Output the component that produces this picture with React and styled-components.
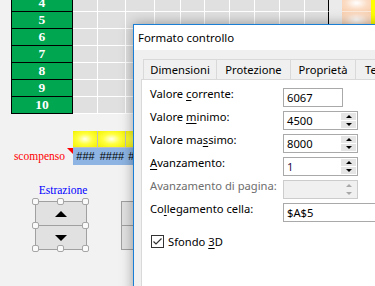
import styled, { createGlobalStyle } from "styled-components";

const GlobalStyle = createGlobalStyle`
  html, body {
    margin: 0;
    padding: 0;
    background: #f2f2f2;
  }
`;

const uiFont = `"Noto Sans", "Open Sans", sans-serif`;
const serifFont = `"Liberation Serif", "Times New Roman", serif`;

const Page = styled.div`
  position: relative;
  width: 375px;
  height: 286px;
  overflow: hidden;
  background: #f2f2f2;
`;

const Sheet = styled.div`
  display: flex;
  flex-direction: column;
  margin-top: -5px;
  padding-left: 11px;
`;

const Row = styled.div`
  display: flex;
  height: 17px;
`;

const HeaderCell = styled.div`
  box-sizing: border-box;
  width: 62px;
  height: 17px;
  background: #00a650;
  border: 1px solid #000;
  border-top: none;
  color: #fff;
  font: bold 13.5px/16px ${serifFont};
  text-align: center;
`;

const GridCell = styled.div`
  box-sizing: border-box;
  width: ${(p) => p.$w}px;
  background: #e0e0e0;
  border-right: 1px solid ${(p) => (p.$edge ? "#000" : "#fff")};
  border-bottom: 1px solid #fff;
`;

const GapCell = styled.div`
  width: 13px;
  background: #ebebeb;
`;

const AccentCell = styled.div`
  box-sizing: border-box;
  width: 29px;
  border-bottom: 1px solid #fde9da;
  background: radial-gradient(ellipse at center, #fff 0%, #fbdcc4 55%, #f9cfae 100%);
`;

const YellowStrip = styled.div`
  width: 4px;
  background: #ffff00;
`;

const LabelCell = styled.div`
  position: relative;
  box-sizing: border-box;
  width: 62px;
  padding-right: 8px;
  color: #ff0000;
  font: 11.5px/17px ${serifFont};
  text-align: right;
`;

const CommentMark = styled.span`
  position: absolute;
  top: 0;
  right: 0;
  width: 0;
  height: 0;
  border-top: 6px solid #ff0000;
  border-left: 6px solid transparent;
`;

const YellowCell = styled.div`
  box-sizing: border-box;
  width: ${(p) => p.$w}px;
  border-right: 1px solid #bfbfbf;
  border-bottom: 1px solid #bfbfbf;
  background: radial-gradient(ellipse at center, #fffff0 0%, #ffff40 45%, #f2f200 100%);
`;

const BlueCell = styled.div`
  width: ${(p) => p.$w}px;
  background: #8db4e2;
  color: #000;
  font: 11px/17px "Liberation Sans", Arial, sans-serif;
  text-align: center;
  white-space: nowrap;
  overflow: hidden;
`;

const ControlsArea = styled.div`
  display: flex;
  align-items: flex-end;
  gap: 34px;
  padding: 18px 0 0 35px;
`;

const ControlGroup = styled.div`
  display: flex;
  flex-direction: column;
  align-items: center;
  width: 52px;
`;

const Caption = styled.div`
  color: #0000ff;
  font: 11.5px/14px ${serifFont};
  margin-bottom: 4px;
  padding-left: 4px;
  white-space: nowrap;
`;

const SpinControl = styled.div`
  position: relative;
  box-sizing: border-box;
  display: flex;
  flex-direction: column;
  width: ${(p) => p.$w}px;
  height: 49px;
  border: 1px solid #a0a0a0;
  background: #e1e1e1;
`;

const SpinHalf = styled.div`
  flex: 1;
  display: flex;
  align-items: center;
  justify-content: center;
  & + & {
    border-top: 1px solid #a0a0a0;
  }
`;

const Arrow = styled.span`
  width: 0;
  height: 0;
  border-left: 6px solid transparent;
  border-right: 6px solid transparent;
  ${(p) => (p.$down ? "border-top: 6px solid #000;" : "border-bottom: 6px solid #000;")}
`;

const Handle = styled.span`
  position: absolute;
  left: ${(p) => p.$x};
  top: ${(p) => p.$y};
  box-sizing: border-box;
  width: 7px;
  height: 7px;
  margin: -4px 0 0 -4px;
  border: 1px solid #a6a6a6;
  border-radius: 2px;
  background: #fafafa;
`;

const Dialog = styled.div`
  position: absolute;
  left: 133px;
  top: 24px;
  width: 300px;
  height: 300px;
  display: flex;
  flex-direction: column;
  border: 1px solid #1a7fd4;
  background: #f0f0f0;
  box-shadow: 0 0 12px rgba(0, 0, 0, 0.35);
  font-family: ${uiFont};
  font-size: 11.2px;
  color: #000;
`;

const TitleBar = styled.div`
  height: 25px;
  padding-left: 4px;
  background: #fff;
  line-height: 25px;
  font-size: 11.4px;
`;

const Body = styled.div`
  flex: 1;
  display: flex;
  flex-direction: column;
  padding: 9px 0 0 7px;
`;

const TabStrip = styled.div`
  display: flex;
  height: 20px;
  margin-left: 2px;
`;

const Tab = styled.div`
  box-sizing: border-box;
  width: ${(p) => p.$w}px;
  height: 21px;
  border: 1px solid #d9d9d9;
  border-right: none;
  text-align: center;
  line-height: 19px;
  white-space: nowrap;
  overflow: hidden;
  &:last-child {
    border-right: 1px solid #d9d9d9;
    text-align: left;
    padding-left: 9px;
  }
`;

const Panel = styled.div`
  flex: 1;
  border: 1px solid #d9d9d9;
  background: #fff;
  padding: 8px 0 0 8px;
`;

const Form = styled.div`
  display: grid;
  grid-template-columns: 133px auto;
  row-gap: 4px;
  align-items: start;
`;

const FieldLabel = styled.div`
  line-height: 12px;
  white-space: nowrap;
  color: ${(p) => (p.$disabled ? "#6d6d6d" : "#000")};
`;

const Key = styled.span`
  text-decoration: underline;
  text-underline-offset: 2px;
`;

const Field = styled.div`
  box-sizing: border-box;
  display: flex;
  width: ${(p) => p.$w}px;
  height: 19px;
  border: 1px solid ${(p) => (p.$disabled ? "#cccccc" : "#a9a9a9")};
  background: ${(p) => (p.$disabled ? "#f0f0f0" : "#fff")};
`;

const FieldValue = styled.div`
  flex: 1;
  padding-left: 3px;
  line-height: 17px;
  color: ${(p) => p.$tint || "#000"};
`;

const SpinButtons = styled.div`
  display: flex;
  flex-direction: column;
  width: 15px;
  margin: 1px 1px 1px 0;
  gap: 1px;
`;

const SpinButton = styled.div`
  flex: 1;
  display: flex;
  align-items: center;
  justify-content: center;
  background: ${(p) => (p.$disabled ? "#f0f0f0" : "#e5e5e5")};
`;

const MiniArrow = styled.span`
  width: 0;
  height: 0;
  border-left: 3px solid transparent;
  border-right: 3px solid transparent;
  ${(p) =>
    p.$down
      ? `border-top: 3px solid ${p.$disabled ? "#a8a8a8" : "#000"};`
      : `border-bottom: 3px solid ${p.$disabled ? "#a8a8a8" : "#000"};`}
`;

const CheckRow = styled.div`
  display: flex;
  align-items: center;
  gap: 4px;
  margin: 12px 0 0 1px;
`;

const CheckBox = styled.span`
  box-sizing: border-box;
  display: flex;
  width: 13px;
  height: 13px;
  border: 1px solid #333;
  background: #fff;
`;

const columns = [25, 28, 29, 26, 25, 25, 25, 25, 25, 24];
// only the cells left of the dialog are visible in the lower rows
const lowColumns = columns.slice(0, 3);
const numbers = [4, 5, 6, 7, 8, 9, 10];
const overflow = ["###", "####", "####"];

const handles = [
  ["0%", "0%"], ["50%", "0%"], ["100%", "0%"],
  ["0%", "50%"], ["100%", "50%"],
  ["0%", "100%"], ["50%", "100%"], ["100%", "100%"],
];

function Spinner({ disabled }) {
  return (
    <SpinButtons>
      <SpinButton $disabled={disabled}>
        <MiniArrow $disabled={disabled} />
      </SpinButton>
      <SpinButton $disabled={disabled}>
        <MiniArrow $down $disabled={disabled} />
      </SpinButton>
    </SpinButtons>
  );
}

export default function App() {
  return (
    <Page>
      <GlobalStyle />
      <Sheet>
        {numbers.map((n) => (
          <Row key={n}>
            <HeaderCell>{n}</HeaderCell>
            {columns.map((w, i) => (
              <GridCell key={i} $w={w} $edge={i === columns.length - 1} />
            ))}
            <GapCell />
            <AccentCell />
            <YellowStrip />
          </Row>
        ))}
        <Row />
        <Row>
          <LabelCell />
          {lowColumns.map((w, i) => (
            <YellowCell key={i} $w={w} />
          ))}
        </Row>
        <Row>
          <LabelCell>
            scompenso
            <CommentMark />
          </LabelCell>
          {lowColumns.map((w, i) => (
            <BlueCell key={i} $w={w}>
              {overflow[i]}
            </BlueCell>
          ))}
        </Row>
      </Sheet>

      <ControlsArea>
        <ControlGroup>
          <Caption>Estrazione</Caption>
          <SpinControl $w={52}>
            <SpinHalf>
              <Arrow />
            </SpinHalf>
            <SpinHalf>
              <Arrow $down />
            </SpinHalf>
            {handles.map(([x, y]) => (
              <Handle key={x + y} $x={x} $y={y} />
            ))}
          </SpinControl>
        </ControlGroup>
        <SpinControl $w={40}>
          <SpinHalf />
          <SpinHalf />
        </SpinControl>
      </ControlsArea>

      <Dialog>
        <TitleBar>Formato controllo</TitleBar>
        <Body>
          <TabStrip>
            <Tab $w={73}>Dimensioni</Tab>
            <Tab $w={74}>Protezione</Tab>
            <Tab $w={65}>Proprietà</Tab>
            <Tab $w={70}>Testo alternativo</Tab>
          </TabStrip>
          <Panel>
            <Form>
              <FieldLabel>
                Valore <Key>c</Key>orrente:
              </FieldLabel>
              <Field $w={60}>
                <FieldValue>6067</FieldValue>
              </Field>

              <FieldLabel>
                Valore <Key>m</Key>inimo:
              </FieldLabel>
              <Field $w={75}>
                <FieldValue>4500</FieldValue>
                <Spinner />
              </Field>

              <FieldLabel>
                Valore ma<Key>s</Key>simo:
              </FieldLabel>
              <Field $w={75}>
                <FieldValue>8000</FieldValue>
                <Spinner />
              </Field>

              <FieldLabel>
                <Key>A</Key>vanzamento:
              </FieldLabel>
              <Field $w={75}>
                <FieldValue $tint="#2e0f45">1</FieldValue>
                <Spinner />
              </Field>

              <FieldLabel $disabled>Avanzamento di pagina:</FieldLabel>
              <Field $w={75} $disabled>
                <FieldValue />
                <Spinner disabled />
              </Field>

              <FieldLabel>
                Co<Key>l</Key>legamento cella:
              </FieldLabel>
              <Field $w={120}>
                <FieldValue>$A$5</FieldValue>
              </Field>
            </Form>
            <CheckRow>
              <CheckBox>
                <svg width="11" height="11" viewBox="0 0 11 11">
                  <path d="M1.5 5.5 L4 8 L9.5 2.5" fill="none" stroke="#333" strokeWidth="1.2" />
                </svg>
              </CheckBox>
              <span>
                Sfondo <Key>3</Key>D
              </span>
            </CheckRow>
          </Panel>
        </Body>
      </Dialog>
    </Page>
  );
}
